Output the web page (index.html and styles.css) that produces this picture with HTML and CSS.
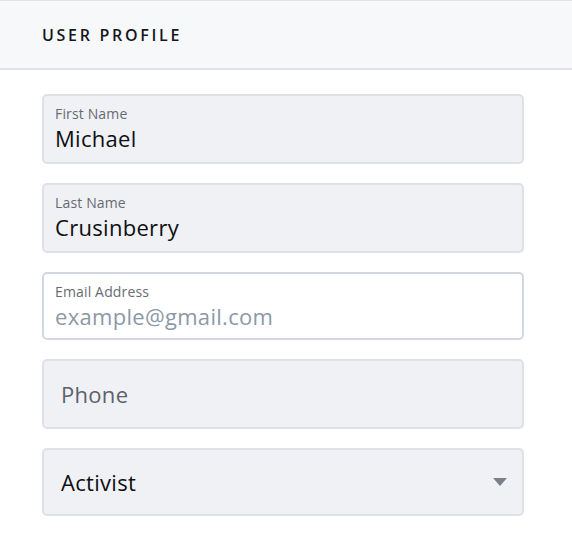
FILE: index.html
```html
<!DOCTYPE html>
<html>
<head>
<meta charset="utf-8">
<link rel="stylesheet" href="styles.css">
</head>
<body>
<header class="panel-header">
  <h1 class="panel-title">USER PROFILE</h1>
</header>
<form class="profile-form">
  <div class="field filled">
    <span class="field-label">First Name</span>
    <span class="field-value">Michael</span>
  </div>
  <div class="field filled">
    <span class="field-label">Last Name</span>
    <span class="field-value">Crusinberry</span>
  </div>
  <div class="field focused">
    <span class="field-label">Email Address</span>
    <span class="field-value placeholder">example@gmail.com</span>
  </div>
  <div class="field empty">
    <span class="field-big placeholder-dark">Phone</span>
  </div>
  <div class="field empty select">
    <span class="field-big">Activist</span>
    <svg class="caret" width="14" height="8" viewBox="0 0 14 8"><path d="M0 0H14L7 8Z" fill="#7b818a"/></svg>
  </div>
</form>
</body>
</html>
```
FILE: styles.css
```css
* { box-sizing: border-box; }
body {
  margin: 0;
  background: #ffffff;
  font-family: "Open Sans", "Liberation Sans", sans-serif;
  color: #111317;
}
.panel-header {
  height: 70px;
  background: #f7f8fa;
  border-top: 1px solid #e1e3e8;
  border-bottom: 2px solid #e1e3e8;
  padding-left: 42px;
  display: flex;
  align-items: center;
}
.panel-title {
  margin: 0;
  font-size: 16px;
  font-weight: 600;
  letter-spacing: 2.7px;
  color: #15171b;
}
.profile-form {
  padding: 24px 0 0 42px;
  display: flex;
  flex-direction: column;
  gap: 19px;
}
.field {
  width: 482px;
  height: 70px;
  border: 2px solid #dfe1e6;
  border-radius: 5px;
  background: #f0f1f5;
  display: flex;
  flex-direction: column;
  padding: 8px 11px 0;
}
.field.focused {
  background: #ffffff;
  border-color: #d3d7df;
  height: 68px;
}
.field-label {
  font-size: 14px;
  line-height: 19px;
  letter-spacing: 0.15px;
  color: #676b72;
}
.field-value {
  font-size: 22px;
  line-height: 31px;
  letter-spacing: 0.3px;
  color: #0d0f12;
}
.placeholder { color: #8d98a7; }
.field.empty {
  flex-direction: row;
  align-items: center;
  padding: 0 15px 0 17px;
}
.field.select { height: 68px; justify-content: space-between; }
.field-big {
  font-size: 22px;
  letter-spacing: 0.3px;
  color: #0d0f12;
}
.placeholder-dark { color: #5c616b; }
```
